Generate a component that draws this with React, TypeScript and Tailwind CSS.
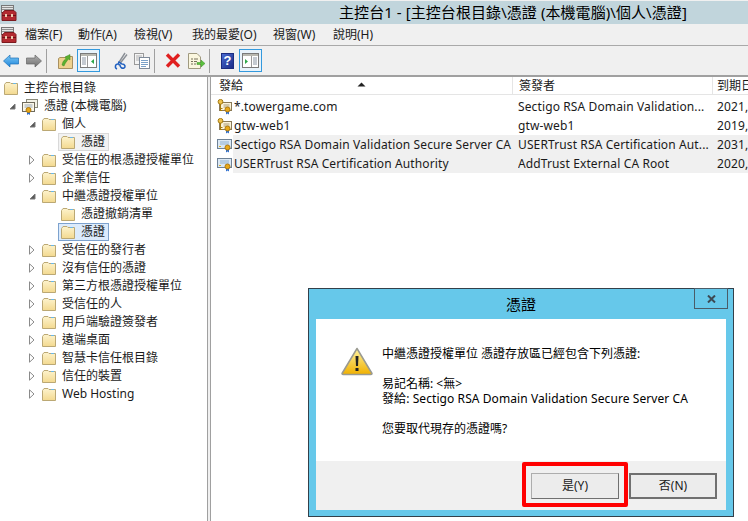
const Toolbox = () => (
  <svg width="16" height="16" viewBox="0 0 16 16" className="shrink-0">
    <rect x=".5" y=".5" width="12" height="7" fill="#e4e4e4" stroke="#777" />
    <path d="M1 2.500h11M1 4.500h11" stroke="#8f8f8f" />
    <path d="M2 7.500 3.500 5.500H13L15 7.500V15.500H1V7.500Z" fill="#b32a30" stroke="#7c1a1e" />
    <rect x="1" y="10" width="14" height="1" fill="#6d1216" />
    <rect x="4" y="9" width="2" height="3" fill="#eccbb0" />
    <rect x="10" y="9" width="2" height="3" fill="#eccbb0" />
  </svg>
);

const Folder = () => (
  <svg width="14" height="13" viewBox="0 0 14 13" className="shrink-0">
    <defs>
      <linearGradient id="folderFill" x1="0" y1="0" x2="0" y2="1">
        <stop offset="0" stopColor="#fdf3cd" />
        <stop offset="1" stopColor="#f3d98f" />
      </linearGradient>
    </defs>
    <path d="M.5 2.500V12.500H13.500V1.500H7L6 .5H2Z" fill="url(#folderFill)" stroke="#bba874" />
    <rect x="9" y="1" width="3" height="1" fill="#6bb7e6" />
  </svg>
);

const Expanded = () => (
  <svg width="7" height="7" viewBox="0 0 7 7" className="shrink-0">
    <path d="M6 1V6H1Z" fill="#595959" stroke="#7a7a7a" />
  </svg>
);

const Collapsed = () => (
  <svg width="6" height="10" viewBox="0 0 6 10" className="shrink-0">
    <path d="M.5 .8 5 5 .5 9.200Z" fill="#fff" stroke="#8a8a8a" />
  </svg>
);

const CertIcon = ({ keyed }: { keyed?: boolean }) => (
  <svg width="16" height="16" viewBox="0 0 16 16" className="shrink-0">
    {keyed ? (
      <>
        <rect x="2.500" y="3.500" width="12" height="8" fill="#fbf3da" stroke="#8a7a58" />
        <path d="M6.500 6h6M6.500 8h6" stroke="#a89a78" />
        <circle cx="3.500" cy="2.800" r="2.400" fill="#f0c24a" stroke="#a57a10" />
        <path d="M3.500 5v7M3.500 9.500h2M3.500 11.500h1.500" stroke="#a57a10" />
      </>
    ) : (
      <>
        <rect x=".5" y="2.500" width="14" height="9" fill="#dbe8f4" stroke="#6f8296" />
        <path d="M3 5h9M3 7h9" stroke="#8fb0d0" />
        <rect x="2" y="9" width="2" height="1" fill="#e0b020" />
      </>
    )}
    <path d="M9 12v3.500l1.500-1 1.500 1V12" fill="#2f6fd0" />
    <circle cx="10.500" cy="10.500" r="2.500" fill="#e8a818" stroke="#b07a10" />
  </svg>
);

const StoreIcon = () => (
  <svg width="16" height="17" viewBox="0 0 16 17" className="shrink-0">
    <rect x="4.500" y="1.500" width="11" height="8" fill="#f4f2e6" stroke="#8a8a7a" />
    <rect x=".5" y="4.500" width="12" height="9" fill="#fbf7e8" stroke="#6f6a5c" />
    <path d="M2.500 7h8M2.500 9h8" stroke="#9aa8b8" />
    <path d="M5 13v4l1.500-1 1.500 1v-4" fill="#2f6fd0" />
    <circle cx="6.500" cy="12" r="2.500" fill="#e8a818" stroke="#b07a10" />
  </svg>
);

const Separator = () => <div className="h-[24px] w-px bg-[#a0a0a0]" />;

const PaneToggle = ({ flip }: { flip?: boolean }) => (
  <div className="flex h-[23px] w-[23px] items-center justify-center border border-[#3399dd] bg-[#e8f3fb]">
    <svg width="17" height="15" viewBox="0 0 17 15">
      <rect x=".5" y=".5" width="16" height="14" fill="#fff" stroke="#7a7a7a" />
      <rect x="1" y="1" width="15" height="2" fill="#b8b8b0" />
      {flip ? (
        <>
          <path d="M11 5h4M11 7h4M11 9h4M11 11h4" stroke="#8a96a4" />
          <path d="M9.500 3v11" stroke="#9a9a9a" />
          <path d="M3 6v5l3-2.500Z" fill="#2ea84a" />
        </>
      ) : (
        <>
          <path d="M2 5h4M2 7h4M2 9h4M2 11h4" stroke="#8a96a4" />
          <path d="M7.500 3v11" stroke="#9a9a9a" />
          <path d="M14 6v5l-3-2.500Z" fill="#2ea84a" />
        </>
      )}
    </svg>
  </div>
);

const Toolbar = () => (
  <div className="flex h-[29px] items-center bg-[#f0f0f0] pl-[3px]">
    <svg width="16" height="14" viewBox="0 0 16 14">
      <defs>
        <linearGradient id="backFill" x1="0" y1="0" x2="0" y2="1">
          <stop offset="0" stopColor="#7cc8f4" />
          <stop offset="1" stopColor="#1f86dc" />
        </linearGradient>
        <linearGradient id="fwdFill" x1="0" y1="0" x2="0" y2="1">
          <stop offset="0" stopColor="#b0b0b0" />
          <stop offset="1" stopColor="#707070" />
        </linearGradient>
      </defs>
      <path d="M.5 7 7 1V4H15.500V10H7V13Z" fill="url(#backFill)" stroke="#1c70b8" strokeWidth=".7" strokeLinejoin="round" />
    </svg>
    <svg width="16" height="14" viewBox="0 0 16 14" className="ml-[7px]">
      <path d="M15.500 7 9 1V4H.5V10H9V13Z" fill="url(#fwdFill)" stroke="#666" strokeWidth=".7" strokeLinejoin="round" />
    </svg>
    <div className="ml-[4px]">
      <Separator />
    </div>
    <svg width="15" height="16" viewBox="0 0 15 16" className="ml-[11px]">
      <path d="M.5 5.500V15.500H14.500V3.500H8L7 4.500H2Z" fill="#efd18e" stroke="#a89060" />
      <path d="M4 12C5 8 6 7 8 6L7 4 12 1.500 12 7 10.500 6C9 8 7 10 6 13Z" fill="#5cb030" stroke="#3c8a20" strokeWidth=".5" />
    </svg>
    <div className="ml-[4px]">
      <PaneToggle />
    </div>
    <svg width="15" height="18" viewBox="0 0 15 18" className="ml-[13px]">
      <path d="M12 1 5.500 11M14 2.500 7 11.500" stroke="#8a8f96" strokeWidth="1.400" />
      <path d="M4 17C1.500 16 2 12 5 12L6 10 9 12C12 12 13 15 11 16 9 17 7 15 7 13L5.500 12.500" fill="none" stroke="#2060c0" strokeWidth="1.500" />
    </svg>
    <svg width="16" height="16" viewBox="0 0 16 16" className="ml-[6px]">
      <rect x=".5" y=".5" width="9" height="11" fill="#f4f4f4" stroke="#9a9a9a" />
      <path d="M2 3h6M2 5h3M2 7h3" stroke="#b0b0b0" />
      <rect x="5.500" y="4.500" width="10" height="11" fill="#fff" stroke="#7f8b9a" />
      <path d="M7 7.500h7M7 9.500h7M7 11.500h7M7 13.500h5" stroke="#7aa0c8" />
    </svg>
    <div className="ml-[4px]">
      <Separator />
    </div>
    <svg width="16" height="15" viewBox="0 0 16 15" className="ml-[10px]">
      <path d="M2 1.500 14 13.500M14 1.500 2 13.500" stroke="#e02020" strokeWidth="3.400" />
    </svg>
    <svg width="17" height="16" viewBox="0 0 17 16" className="ml-[7px]">
      <path d="M.5 .5H9L12.500 4V15.500H.5Z" fill="#fbf7df" stroke="#a09a80" />
      <path d="M3 6h2M6 6h4M3 8.500h2M6 8.500h3M3 11h2M6 11h2" stroke="#77705a" />
      <path d="M9 9.500h4V7L17 10.500 13 14V11.500H9Z" fill="#5cc040" stroke="#3c9020" strokeWidth=".5" />
    </svg>
    <div className="ml-[4px]">
      <Separator />
    </div>
    <div className="ml-[11px] flex h-[16px] w-[13px] items-center justify-center border border-[#1c2c80] bg-gradient-to-br from-[#4a6ad0] to-[#1c2c88] font-['Liberation_Sans',sans-serif] text-[13px] font-bold leading-none text-white">
      ?
    </div>
    <div className="ml-[5px]">
      <PaneToggle flip />
    </div>
  </div>
);

const menus = [
  { label: "檔案(F)", width: "w-[53px]" },
  { label: "動作(A)", width: "w-[56px]" },
  { label: "檢視(V)", width: "w-[58px]" },
  { label: "我的最愛(O)", width: "w-[81px]" },
  { label: "視窗(W)", width: "w-[60px]" },
  { label: "說明(H)", width: "w-[50px]" },
];

const tree: { label: string; depth: number; toggle?: "open" | "closed"; kind?: "store"; state?: "grey" | "blue" }[] = [
  { label: "主控台根目錄", depth: 0 },
  { label: "憑證 (本機電腦)", depth: 1, toggle: "open", kind: "store" },
  { label: "個人", depth: 2, toggle: "open" },
  { label: "憑證", depth: 3, state: "grey" },
  { label: "受信任的根憑證授權單位", depth: 2, toggle: "closed" },
  { label: "企業信任", depth: 2, toggle: "closed" },
  { label: "中繼憑證授權單位", depth: 2, toggle: "open" },
  { label: "憑證撤銷清單", depth: 3 },
  { label: "憑證", depth: 3, state: "blue" },
  { label: "受信任的發行者", depth: 2, toggle: "closed" },
  { label: "沒有信任的憑證", depth: 2, toggle: "closed" },
  { label: "第三方根憑證授權單位", depth: 2, toggle: "closed" },
  { label: "受信任的人", depth: 2, toggle: "closed" },
  { label: "用戶端驗證簽發者", depth: 2, toggle: "closed" },
  { label: "遠端桌面", depth: 2, toggle: "closed" },
  { label: "智慧卡信任根目錄", depth: 2, toggle: "closed" },
  { label: "信任的裝置", depth: 2, toggle: "closed" },
  { label: "Web Hosting", depth: 2, toggle: "closed" },
];

const TreeRow = ({ row }: { row: (typeof tree)[number] }) => {
  const indent = ["pl-[1px]", "pl-[8px]", "pl-[28px]", "pl-[58px]"][row.depth];
  const stateClass =
    row.state === "grey"
      ? "border-[#d9d9d9] bg-[#f2f2f2]"
      : row.state === "blue"
        ? "border-[#7da2ce] bg-[#dcebfc]"
        : "border-transparent";
  return (
    <div className={`flex h-[18px] items-center ${indent}`}>
      {row.toggle === "open" && (
        <div className="mr-[3px] flex w-[8px] justify-center">
          <Expanded />
        </div>
      )}
      {row.toggle === "closed" && (
        <div className="mr-[3px] flex w-[8px] justify-center">
          <Collapsed />
        </div>
      )}
      <div className={`flex h-[18px] items-center border pl-[2px] pr-[3px] ${stateClass}`}>
        {row.kind === "store" ? <StoreIcon /> : <Folder />}
        <span className="ml-[6px] whitespace-nowrap">{row.label}</span>
      </div>
    </div>
  );
};

const certs = [
  { to: "*.towergame.com", by: "Sectigo RSA Domain Validation...", date: "2021,", keyed: true },
  { to: "gtw-web1", by: "gtw-web1", date: "2019,", keyed: true },
  { to: "Sectigo RSA Domain Validation Secure Server CA", by: "USERTrust RSA Certification Aut...", date: "2031," },
  { to: "USERTrust RSA Certification Authority", by: "AddTrust External CA Root", date: "2020," },
];

const WarningIcon = () => (
  <svg width="32" height="29" viewBox="0 0 32 29" className="shrink-0">
    <defs>
      <linearGradient id="warn" x1="0" y1="0" x2="0" y2="1">
        <stop offset="0" stopColor="#fff3a0" />
        <stop offset="1" stopColor="#f0b000" />
      </linearGradient>
    </defs>
    <path d="M16 1.500 31 26.500Q31 27.500 30 27.500H2Q1 27.500 1 26.500Z" fill="url(#warn)" stroke="#9a9a90" strokeWidth="1.500" strokeLinejoin="round" />
    <path d="M14.500 9h3L17 19h-2Z" fill="#222" />
    <rect x="14.500" y="21" width="3" height="3" fill="#222" />
  </svg>
);

const Dialog = () => (
  <div className="absolute left-[308px] top-[288px] flex h-[229px] w-[426px] flex-col border border-[#33404a] bg-[#66c8ea] px-[7px] pb-[6px]">
    <div className="relative flex h-[30px] items-center justify-center pt-[1px] text-[15px] text-black">
      憑證
      <div className="absolute right-[-2px] top-[-1px] flex h-[21px] w-[34px] items-center justify-center border border-[#4a5c68]">
        <svg width="9" height="8" viewBox="0 0 9 8">
          <path d="M1 .5 8 7.500M8 .5 1 7.500" stroke="#3c4a54" strokeWidth="2" />
        </svg>
      </div>
    </div>
    <div className="flex flex-1 flex-col bg-white">
      <div className="flex flex-1 pl-[25px] pt-[27px]">
        <div className="pt-[1px]">
          <WarningIcon />
        </div>
        <div className="ml-[9px] flex flex-col text-[12px] leading-[15px] text-black">
          <div className="flex h-[15px] items-center whitespace-nowrap">中繼憑證授權單位 憑證存放區已經包含下列憑證:</div>
          <div className="mt-[15px] h-[15px] whitespace-nowrap">易記名稱: &lt;無&gt;</div>
          <div className="h-[15px] whitespace-nowrap tracking-[0.08px]">發給: Sectigo RSA Domain Validation Secure Server CA</div>
          <div className="mt-[15px] h-[15px] whitespace-nowrap">您要取代現存的憑證嗎?</div>
        </div>
      </div>
      <div className="flex h-[49px] items-start justify-end bg-[#f0f0f0] pr-[9px] pt-[12px]">
        <div className="relative flex h-[26px] w-[88px] items-center justify-center border border-[#adadad] border-b-[#707070] border-r-[#707070] bg-[#ececec] text-[12px]">
          是(Y)
          <div className="absolute left-[-10px] top-[-12px] h-[45px] w-[106px] rounded-[2px] border-[4px] border-[#ff0000]" />
        </div>
        <div className="ml-[10px] flex h-[26px] w-[88px] items-center justify-center border-2 border-[#707070] bg-[#ececec] text-[12px]">
          否(N)
        </div>
      </div>
    </div>
  </div>
);

export default function App() {
  return (
    <div className="relative flex h-[521px] w-[748px] flex-col overflow-hidden bg-[#f0f0f0] font-['Noto_Sans','Noto_Sans_CJK_TC',sans-serif] text-[12px] text-[#1a1a1a]">
      <div className="mt-px flex h-[23px] items-center bg-[#c1d5dc]">
        <div className="pl-px">
          <Toolbox />
        </div>
        <div className="ml-[322px] whitespace-nowrap text-[15px] tracking-[0.07px] text-black">
          主控台1 - [主控台根目錄\憑證 (本機電腦)\個人\憑證]
        </div>
      </div>
      <div className="flex h-[22px] items-center border-b border-[#a9a9a9] pl-px">
        <Toolbox />
        <div className="ml-[8px] flex whitespace-nowrap">
          {menus.map((m) => (
            <span key={m.label} className={m.width}>
              {m.label}
            </span>
          ))}
        </div>
      </div>
      <Toolbar />
      <div className="flex min-h-0 flex-1 gap-[2px] border-t-2 border-[#a0a0a0] bg-[#f0f0f0]">
        <div className="w-[208px] shrink-0 border-r border-[#a0a0a0] bg-white pt-[2px]">
          {tree.map((row, i) => (
            <TreeRow key={i} row={row} />
          ))}
        </div>
        <div className="min-w-0 flex-1 border-l border-[#a0a0a0] bg-white">
          <div className="relative flex h-[18px] items-center border-b border-[#e5e5e5] text-[12px]">
            <div className="h-full w-[302px] shrink-0 border-r border-[#e5e5e5] pl-[8px] leading-[18px]">發給</div>
            <div className="h-full w-[200px] shrink-0 border-r border-[#e5e5e5] pl-[6px] leading-[18px]">簽發者</div>
            <div className="h-full whitespace-nowrap pl-[4px] leading-[18px]">到期日</div>
            <svg width="9" height="5" viewBox="0 0 9 5" className="absolute left-[146px] top-[5px]">
              <path d="M.5 4.500 4.500 .5 8.500 4.500Z" fill="#222" />
            </svg>
          </div>
          <div className="pt-[2px]">
            {certs.map((c) => (
              <div key={c.to} className="flex h-[19px] items-center whitespace-nowrap tracking-[0.12px]">
                <div className="flex h-full w-[22px] shrink-0 items-center pl-[6px]">
                  <CertIcon keyed={c.keyed} />
                </div>
                <div className={`flex h-full min-w-0 flex-1 items-center ${c.keyed ? "" : "bg-[#f0f0f0]"}`}>
                  <div className="w-[285px] shrink-0 overflow-hidden pl-[1px]">{c.to}</div>
                  <div className="w-[199px] shrink-0 overflow-hidden">{c.by}</div>
                  <div>{c.date}</div>
                </div>
              </div>
            ))}
          </div>
        </div>
      </div>
      <Dialog />
    </div>
  );
}
